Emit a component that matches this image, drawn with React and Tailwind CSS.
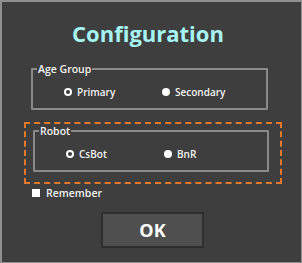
import React, { useState } from 'react';

const font = { fontFamily: '"Open Sans", "Noto Sans", sans-serif' };

const Radio = ({ checked, label, onClick, className }) => (
  <button onClick={onClick} className={`flex items-center gap-[5px] ${className}`}>
    <span className="flex h-[8px] w-[8px] items-center justify-center rounded-full bg-white">
      {checked && <span className="h-[4px] w-[4px] rounded-full bg-[#3a3a3a]" />}
    </span>
    <span className="text-[10px] font-semibold leading-[12px] text-[#f2f2f2]">{label}</span>
  </button>
);

const Group = ({ title, children }) => (
  <fieldset className="ml-[7px] mr-[11px] h-[47px] rounded-[1px] border-2 border-[#8a8a8a] px-0">
    <legend className="ml-[4px] px-[1px] text-[10.5px] font-semibold leading-[12px] text-[#f2f2f2]">{title}</legend>
    <div className="flex items-center pt-[11px]">{children}</div>
  </fieldset>
);

export default function App() {
  const [age, setAge] = useState('Primary');
  const [robot, setRobot] = useState('CsBot');
  const [remember, setRemember] = useState(false);

  return (
    <div className="h-[263px] w-[302px] border-l-2 border-t-2 border-r border-b border-[#8f8f8f] bg-[#3e3e3e]" style={font}>
      <h1 className="pr-[7px] pt-[15px] text-center text-[22px] font-bold leading-[32px] text-[#a6f3f3]">Configuration</h1>

      <div className="mt-[14px] px-[22px]">
        <Group title="Age Group">
          <Radio className="ml-[31px] w-[98px]" checked={age === 'Primary'} label="Primary" onClick={() => setAge('Primary')} />
          <Radio checked={age === 'Secondary'} label="Secondary" onClick={() => setAge('Secondary')} />
        </Group>
      </div>

      <div className="ml-[22px] mr-[19px] mt-[12px] h-[62px] border-2 border-dashed border-[#e0792e] pt-[1px]">
        <Group title="Robot">
          <Radio className="ml-[31px] w-[98px]" checked={robot === 'CsBot'} label="CsBot" onClick={() => setRobot('CsBot')} />
          <Radio checked={robot === 'BnR'} label="BnR" onClick={() => setRobot('BnR')} />
        </Group>
      </div>

      <label className="ml-[30px] mt-[3px] flex w-fit items-center gap-[6px]">
        <input type="checkbox" checked={remember} onChange={() => setRemember(!remember)} className="h-[8px] w-[8px] appearance-none rounded-none bg-white" />
        <span className="text-[10.5px] font-semibold leading-[12px] text-[#f2f2f2]">Remember</span>
      </label>

      <div className="mt-[13px] flex justify-center pl-[2px]">
        <button className="h-[36px] w-[103px] border-2 border-[#2e2e2e] bg-[#4f4f4f] text-[18px] font-bold text-white">OK</button>
      </div>
    </div>
  );
}
